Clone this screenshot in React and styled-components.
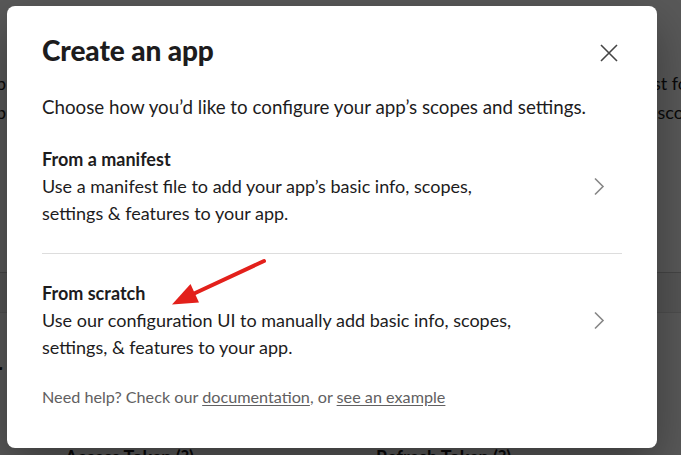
import React from "react";
import styled, { createGlobalStyle } from "styled-components";

const GlobalStyle = createGlobalStyle`
  html, body { margin: 0; padding: 0; }
  body {
    font-family: Lato, "Noto Sans", "Liberation Sans", sans-serif;
    background: #ffffff;
    -webkit-font-smoothing: antialiased;
  }
  * { box-sizing: border-box; }
`;

const Page = styled.div`
  position: relative;
  width: 681px;
  height: 455px;
  overflow: hidden;
  background: #ffffff;
`;

const BgContent = styled.div`
  padding-top: 69px;
  color: #1d1c1d;
`;

const BgLine = styled.div`
  display: flex;
  justify-content: space-between;
  font-size: 18px;
  line-height: 29px;
  margin: 0 ${(p) => p.$right}px 0 -4px;
  white-space: nowrap;
`;

const BgBand = styled.div`
  margin-top: 145px;
  height: 41px;
  background: #f2f2f2;
  border-top: 1px solid #c8c8c8;
  border-bottom: 1px solid #dedede;
`;

const BgHeading = styled.div`
  margin: 44px 0 0 -6px;
  font-size: 22px;
  font-weight: 700;
  line-height: 28px;
`;

const BgRow = styled.div`
  display: flex;
  margin-top: 60px;
  padding-left: 65px;
  font-size: 18px;
  font-weight: 700;
  line-height: 24px;
`;

const BgCell = styled.div`
  width: ${(p) => p.$w}px;
`;

const Overlay = styled.div`
  position: absolute;
  inset: 0;
  background: rgba(0, 0, 0, 0.65);
  padding: 6px 0 0 7px;
`;

const Modal = styled.div`
  position: relative;
  width: 650px;
  height: 442px;
  background: #ffffff;
  border-radius: 8px;
  box-shadow: 0 18px 48px rgba(0, 0, 0, 0.35);
  padding: 26px 35px 0 35px;
  color: #1d1c1d;
`;

const Header = styled.div`
  display: flex;
  align-items: center;
  justify-content: space-between;
`;

const Title = styled.h1`
  margin: 0;
  font-size: 28px;
  line-height: 36px;
  font-weight: 900;
  letter-spacing: -0.1px;
`;

const CloseButton = styled.button`
  width: 26px;
  height: 26px;
  display: flex;
  align-items: center;
  justify-content: center;
  padding: 0;
  border: 0;
  background: transparent;
  color: #454545;
  cursor: pointer;
  margin-top: 6px;
`;

const Subtitle = styled.p`
  margin: 25px 0 0;
  font-size: 18.75px;
  line-height: 27px;
`;

const Option = styled.div`
  display: flex;
  align-items: center;
  padding: 26px 0;
  border-bottom: ${(p) => (p.$divider ? "1px solid #dddddd" : "none")};
  cursor: pointer;
`;

const OptionText = styled.div`
  flex: 1;
`;

const OptionTitle = styled.div`
  font-size: 18px;
  line-height: 27px;
  font-weight: 700;
`;

const OptionDesc = styled.div`
  font-size: 18px;
  line-height: 27px;
  max-width: 470px;
`;

const ChevronBox = styled.div`
  width: 46px;
  display: flex;
  justify-content: center;
  color: #868686;
`;

const Footer = styled.p`
  margin: 0;
  font-size: 16.2px;
  line-height: 20px;
  color: #616061;
`;

const FooterLink = styled.a`
  color: #616061;
  text-decoration: underline;
  text-underline-offset: 2px;
`;

const Annotation = styled.svg`
  position: absolute;
  left: 0;
  top: 0;
  pointer-events: none;
`;

const Chevron = () => (
  <svg width="12" height="19" viewBox="0 0 12 19" fill="none">
    <path d="M2 1.5 L10 9.5 L2 17.5" stroke="currentColor" strokeWidth="1.6" />
  </svg>
);

export default function App() {
  return (
    <>
      <GlobalStyle />
      <Page>
        <BgContent>
          <BgLine $right={-7}>
            <span>p</span>
            <span>st fo</span>
          </BgLine>
          <BgLine $right={-12}>
            <span>b</span>
            <span>iscov</span>
          </BgLine>
          <BgBand />
          <BgHeading>r</BgHeading>
          <BgRow>
            <BgCell $w={311}>Access Token (?)</BgCell>
            <BgCell $w={200}>Refresh Token (?)</BgCell>
          </BgRow>
        </BgContent>
        <Overlay>
          <Modal>
            <Header>
              <Title>Create an app</Title>
              <CloseButton aria-label="Close">
                <svg width="18" height="18" viewBox="0 0 18 18" fill="none">
                  <path d="M1 1 L17 17 M17 1 L1 17" stroke="currentColor" strokeWidth="1.6" />
                </svg>
              </CloseButton>
            </Header>
            <Subtitle>Choose how you’d like to configure your app’s scopes and settings.</Subtitle>
            <Option $divider>
              <OptionText>
                <OptionTitle>From a manifest</OptionTitle>
                <OptionDesc>
                  Use a manifest file to add your app’s basic info, scopes, settings &amp; features to your app.
                </OptionDesc>
              </OptionText>
              <ChevronBox>
                <Chevron />
              </ChevronBox>
            </Option>
            <Option>
              <OptionText>
                <OptionTitle>From scratch</OptionTitle>
                <OptionDesc>
                  Use our configuration UI to manually add basic info, scopes, settings, &amp; features to your app.
                </OptionDesc>
              </OptionText>
              <ChevronBox>
                <Chevron />
              </ChevronBox>
            </Option>
            <Footer>
              Need help? Check our <FooterLink href="#">documentation</FooterLink>, or{" "}
              <FooterLink href="#">see an example</FooterLink>
            </Footer>
          </Modal>
        </Overlay>
        <Annotation width="681" height="455" viewBox="0 0 681 455">
          <line x1="264" y1="261" x2="192" y2="294.5" stroke="#e3201b" strokeWidth="4" strokeLinecap="round" />
          <polygon points="172,304.5 190.5,284 199,302.5" fill="#e3201b" />
        </Annotation>
      </Page>
    </>
  );
}
